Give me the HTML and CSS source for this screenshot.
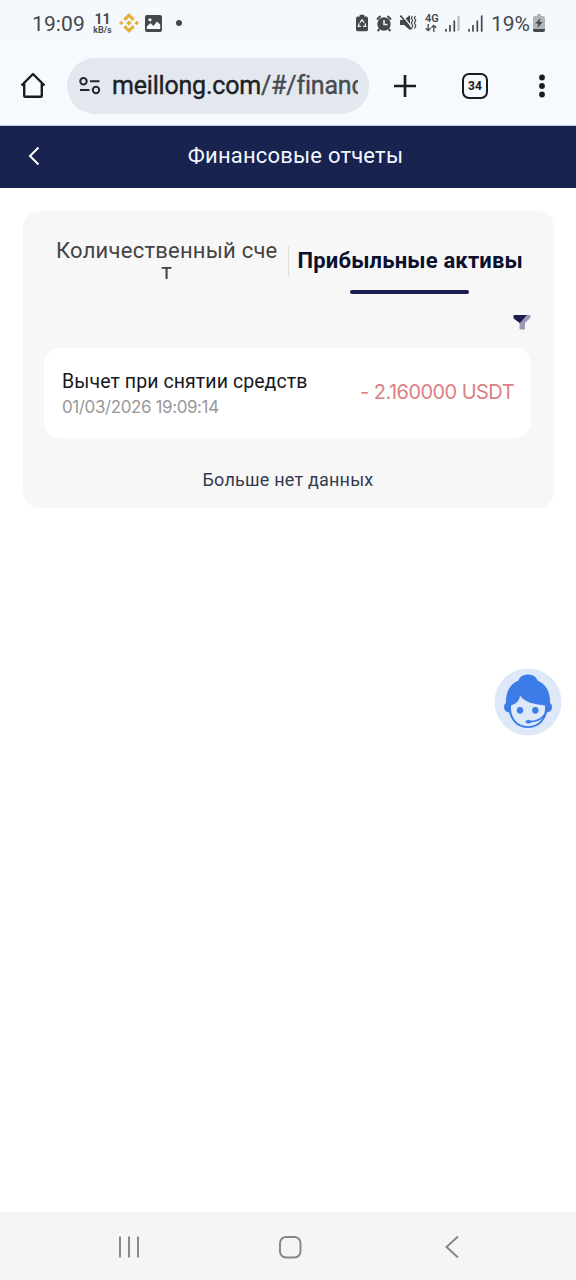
FILE: index.html
```html
<!DOCTYPE html>
<html lang="ru">
<head>
<meta charset="utf-8">
<meta name="viewport" content="width=device-width, initial-scale=1">
<title>Финансовые отчеты</title>
<link rel="stylesheet" href="styles.css">
</head>
<body>
<div class="screen">
  <div class="status">
    <div class="status-left">
      <span class="clock">19:09</span>
      <span class="speed"><b>11</b><small>kB/s</small></span>
      <svg class="coin" width="20" height="20" viewBox="0 0 20 20"><g fill="#e3b23c"><path d="M10 0l5.800 5.700-2.300 2.300L10 4.600 6.500 8 4.200 5.700z"/><path d="M10 20l5.800-5.700-2.300-2.300L10 15.400 6.500 12l-2.300 2.300z"/><path d="M0 10l2.300-2.300L4.600 10l-2.300 2.300zM15.400 10l2.300-2.300L20 10l-2.300 2.300zM7.300 10L10 7.300l2.700 2.700-2.700 2.700z"/></g></svg>
      <svg class="photo" width="17" height="17" viewBox="0 0 17 17"><path fill="#44474b" fill-rule="evenodd" d="M2 0h13q2 0 2 2v13q0 2-2 2H2q-2 0-2-2V2q0-2 2-2zM1.800 14h13.400V9.500L12 6.500 8.500 11 5.500 8 1.800 11.500zM5 3.200a1.600 1.600 0 100 3.200 1.600 1.600 0 000-3.200z"/></svg>
      <span class="dot"></span>
    </div>
    <div class="status-right">
      <svg width="12" height="18" viewBox="0 0 13 18"><path fill="#44474b" d="M4 0h5v2h2q2 0 2 2v12q0 2-2 2H2q-2 0-2-2V4q0-2 2-2h2z"/><path d="M4.200 8.500L6.500 5.500l2.300 3M9.800 9.500l.8 3.200H7.700M5.300 12.700H2.500l.9-3.200" fill="none" stroke="#f4f8fd" stroke-width="1.300"/></svg>
      <svg width="16" height="17" viewBox="0 0 16 17"><g fill="none" stroke="#44474b" stroke-width="2"><path d="M1 4.500L4.500 1M15 4.500L11.500 1M3.500 14l-2 2M12.500 14l2 2"/></g><circle cx="8" cy="9" r="6.700" fill="#44474b"/><path d="M8 5v4.500h3.500" fill="none" stroke="#f4f8fd" stroke-width="1.500"/></svg>
      <svg width="17" height="18" viewBox="0 0 17 18"><path fill="#44474b" d="M0 6h4l6-5v15l-6-5H0z"/><path d="M2 1l10.500 13" stroke="#f4f8fd" stroke-width="1.200"/><path d="M.5 1.500l11 14" stroke="#44474b" stroke-width="1.600"/><path d="M12.300 2l-1 2 1.400 2.500L11.300 9l1.400 2.500-1 3M15.500 2l-1.200 2 1.500 2.500L14.300 9l1.500 2.500-1.300 3" fill="none" stroke="#44474b" stroke-width="1.200"/></svg>
      <span class="net"><b>4G</b><svg width="12" height="8" viewBox="0 0 12 8"><path d="M3.200 0v6.500M.8 4.300l2.400 2.400 2.400-2.400M8.800 8V1.300M6.400 3.700l2.400-2.400 2.400 2.400" fill="none" stroke="#44474b" stroke-width="1.300"/></svg></span>
      <svg width="15" height="17" viewBox="0 0 15 17"><path d="M1 14.500V16M5 10.500V16M9.300 6V16" stroke="#44474b" stroke-width="1.700" stroke-linecap="round"/><path d="M13.500 1v15" stroke="#b3b7bb" stroke-width="2"/></svg>
      <svg width="15" height="17" viewBox="0 0 15 17"><path d="M1 14.500V16M5 10.500V16M9.300 6V16M13.700 1v15" stroke="#44474b" stroke-width="1.700" stroke-linecap="round"/></svg>
      <span class="percent">19%</span>
      <svg class="battery" width="12" height="18" viewBox="0 0 12 18"><path fill="#b0b3b7" d="M4 0h4v2h2q2 0 2 2v12q0 2-2 2H2q-2 0-2-2V4q0-2 2-2h2z"/><path fill="#44474b" d="M0 15h12v1q0 2-2 2H2q-2 0-2-2zM7.500 4L2.300 9.600h3L4.500 13.800 9.800 8H6.600z"/></svg>
    </div>
  </div>

  <div class="toolbar">
    <svg class="home" width="26" height="28" viewBox="0 0 26 28"><path d="M1.500 13.500L13 2l11.500 11.500M4.200 11.500v12q0 1.300 1.300 1.300h15q1.300 0 1.300-1.300v-12" fill="none" stroke="#191c20" stroke-width="2.400" stroke-linejoin="round"/></svg>
    <div class="address">
      <svg width="22" height="18" viewBox="0 0 22 18"><g fill="none" stroke="#24272b" stroke-width="2"><circle cx="4.500" cy="4.300" r="3.200"/><circle cx="17" cy="13" r="3.200"/><path d="M11 4.300h9.500M1 13h9.500"/></g></svg>
      <div class="url">meillong.com<span>/#/financ</span></div>
    </div>
    <svg class="plus" width="24" height="24" viewBox="0 0 24 24"><path d="M12 1v22M1 12h22" stroke="#191c20" stroke-width="2.700"/></svg>
    <div class="tabs-count">34</div>
    <svg class="more" width="8" height="24" viewBox="0 0 8 24"><g fill="#191c20"><circle cx="4" cy="3.500" r="2.900"/><circle cx="4" cy="12" r="2.900"/><circle cx="4" cy="20.500" r="2.900"/></g></svg>
  </div>

  <header class="header">
    <svg width="12" height="20" viewBox="0 0 12 20"><path d="M10.500 1.500L2 10l8.500 8.500" fill="none" stroke="#fff" stroke-width="2"/></svg>
    <h1>Финансовые отчеты</h1>
  </header>

  <main class="content">
    <section class="panel">
      <div class="tabs">
        <div class="tab">Количественный сче<br>т</div>
        <div class="tab tab-active"><span>Прибыльные активы</span></div>
      </div>
      <div class="filter">
        <svg width="18" height="16" viewBox="0 0 18 16"><path fill="#9b99b5" d="M11 1h5.500q1 0 1 1v1.500L12 9v5.500q0 1-1 1H7.500q-1 0-1-1V8z"/><path fill="#1d1c50" d="M1.500 1H14L6.800 9 1.200 5Q.5 4.300.5 3V2Q.5 1 1.500 1z"/></svg>
      </div>
      <article class="record">
        <div>
          <div class="record-title">Вычет при снятии средств</div>
          <div class="record-date">01/03/2026 19:09:14</div>
        </div>
        <div class="amount">- 2.160000 USDT</div>
      </article>
      <p class="end">Больше нет данных</p>
    </section>
  </main>

  <nav class="navbar">
    <svg width="24" height="24" viewBox="0 0 24 24"><path d="M3 1.500v21M12 1.500v21M21 1.500v21" stroke="#858585" stroke-width="1.900"/></svg>
    <svg width="24" height="24" viewBox="0 0 24 24"><rect x="1" y="2" width="20.500" height="20.500" rx="6" fill="none" stroke="#858585" stroke-width="1.900"/></svg>
    <svg width="24" height="24" viewBox="0 0 24 24"><path d="M18 1.500L6.500 12 18 22.500" fill="none" stroke="#858585" stroke-width="1.900"/></svg>
  </nav>

  <div class="support">
    <svg width="68" height="68" viewBox="0 0 68 68"><circle cx="34" cy="34" r="33.500" fill="#dde8f8"/><path fill="#3b7ce8" d="M24.500 12.500C27 4.500 41 4.500 43.500 12.500 52 16 56.500 24 56 35q2 1 2 4 0 4.500-5 5.500C50 55 43 60 34 60S18 55 15 44.500q-5-1-5-5.500 0-3 2-4C11.500 24 16 16 24.500 12.500z"/><path fill="#dde8f8" d="M26 27.500C31 35 42 36.500 51 37.500 52 50 44.500 58.200 34 58.200S16 50 17 37.500C21.500 36 25.500 33 26 27.500z"/><ellipse cx="26" cy="42.300" rx="3.200" ry="3.400" fill="#3b7ce8"/><ellipse cx="41.300" cy="42.300" rx="3.200" ry="3.400" fill="#3b7ce8"/><path d="M51 46c-3 5-9 7.700-16.500 7.700" fill="none" stroke="#3b7ce8" stroke-width="1.500"/><ellipse cx="34.500" cy="53.700" rx="3" ry="1.700" fill="#3b7ce8"/></svg>
  </div>
</div>
</body>
</html>
```
FILE: styles.css
```css
* { box-sizing: border-box; }
body { margin: 0; background: #fff; font-family: Roboto, "Noto Sans", sans-serif; }
svg { display: block; flex: none; }
.screen { position: relative; width: 576px; height: 1280px; display: flex; flex-direction: column; overflow: hidden; }

.status { height: 46px; padding: 0 31px 0 32px; display: flex; justify-content: space-between; align-items: center; background: #f5f9fe; color: #44474b; }
.status-left, .status-right { display: flex; align-items: center; white-space: nowrap; }
.clock { font-size: 21px; letter-spacing: 0.1px; width: 61px; padding-top: 1px; }
.speed { width: 19px; padding-top: 1px; display: flex; flex-direction: column; align-items: center; }
.speed b { font-size: 14px; line-height: 13px; font-weight: 700; }
.speed small { font-size: 9px; line-height: 8px; font-weight: 600; }
.coin { margin-left: 7px; }
.photo { margin-left: 6px; }
.dot { width: 6px; height: 6px; margin-left: 14px; border-radius: 50%; background: #44474b; }
.status-right { gap: 8px; }
.net { width: 13px; margin-right: -1px; }
.net b { display: block; font-size: 11px; line-height: 10px; font-weight: 600; }
.percent { font-size: 21px; letter-spacing: 0; width: 39px; padding-top: 1px; }
.battery { margin-left: -5px; }

.toolbar { height: 80px; padding: 0 30px 0 20px; display: flex; align-items: center; background: #f6f9fe; border-bottom: 1px solid #c4cbd6; }
.address { width: 302px; height: 56px; margin-left: 21px; padding: 0 11px 0 12px; display: flex; align-items: center; gap: 11px; border-radius: 28px; background: #e3e8ef; }
.url { flex: 1; overflow: hidden; white-space: nowrap; font: 400 25px/40px Roboto, sans-serif; letter-spacing: -0.2px; -webkit-text-stroke: 0.4px currentColor; color: #1c1f24; }
.url span { color: #474b51; }
.plus { margin-left: 24px; }
.tabs-count { width: 26px; height: 26px; margin-left: 45px; padding-top: 1px; border: 2.5px solid #191c20; border-radius: 7px; font: 700 12px/21px Roboto, sans-serif; text-align: center; color: #191c20; }
.more { margin-left: 50px; }

.header { height: 62px; padding: 0 13px 0 28px; display: grid; grid-template-columns: 12px 1fr 12px; align-items: center; background: #18234f; color: #f1f7ff; }
.header h1 { margin: 0; padding-bottom: 2px; font-size: 22px; line-height: 30px; font-weight: 400; letter-spacing: 0.2px; text-align: center; }
.header svg { margin-bottom: 2px; }

.content { flex: 1; padding: 23px 22px 0 23px; }
.panel { height: 297px; padding: 22px 23px 0 21px; border-radius: 16px; background: #f7f7f7; }
.tabs { display: grid; grid-template-columns: 1fr 1fr; height: 66px; }
.tab { padding: 7px 0 0 2px; font-size: 22px; line-height: 21px; letter-spacing: 0.23px; text-align: center; color: #444; white-space: nowrap; }
.tab-active { position: relative; padding-top: 17px; letter-spacing: 0.17px; font-weight: 700; color: #0b102d; }
.tab-active::before { content: ""; position: absolute; left: 0; top: 13px; width: 1px; height: 30px; background: #ddd; }
.tab-active::after { content: ""; position: absolute; left: 62px; top: 57px; width: 119px; height: 4px; border-radius: 2px; background: #1d1c50; }
.filter { height: 49px; padding-top: 15px; display: flex; justify-content: flex-end; }
.record { height: 90px; padding: 2px 17px 0 18px; display: flex; justify-content: space-between; align-items: center; border-radius: 16px; background: #fff; white-space: nowrap; }
.record-title { font-size: 19.5px; line-height: 26px; letter-spacing: 0.08px; color: #171a22; }
.record-date { font: 400 17px/25px Inter, sans-serif; letter-spacing: -0.4px; color: #999; }
.amount { padding-bottom: 4px; font: 400 20px/30px Inter, sans-serif; letter-spacing: -0.55px; color: #dc7f84; }
.end { margin: 30px 0 0 1px; font-size: 18px; line-height: 24px; letter-spacing: 0.2px; text-align: center; color: #343a50; }

.navbar { height: 68px; padding: 2px 112px 0 117px; display: flex; justify-content: space-between; align-items: center; background: #f5f5f5; }
.support { position: absolute; left: 494px; top: 668px; }
```
